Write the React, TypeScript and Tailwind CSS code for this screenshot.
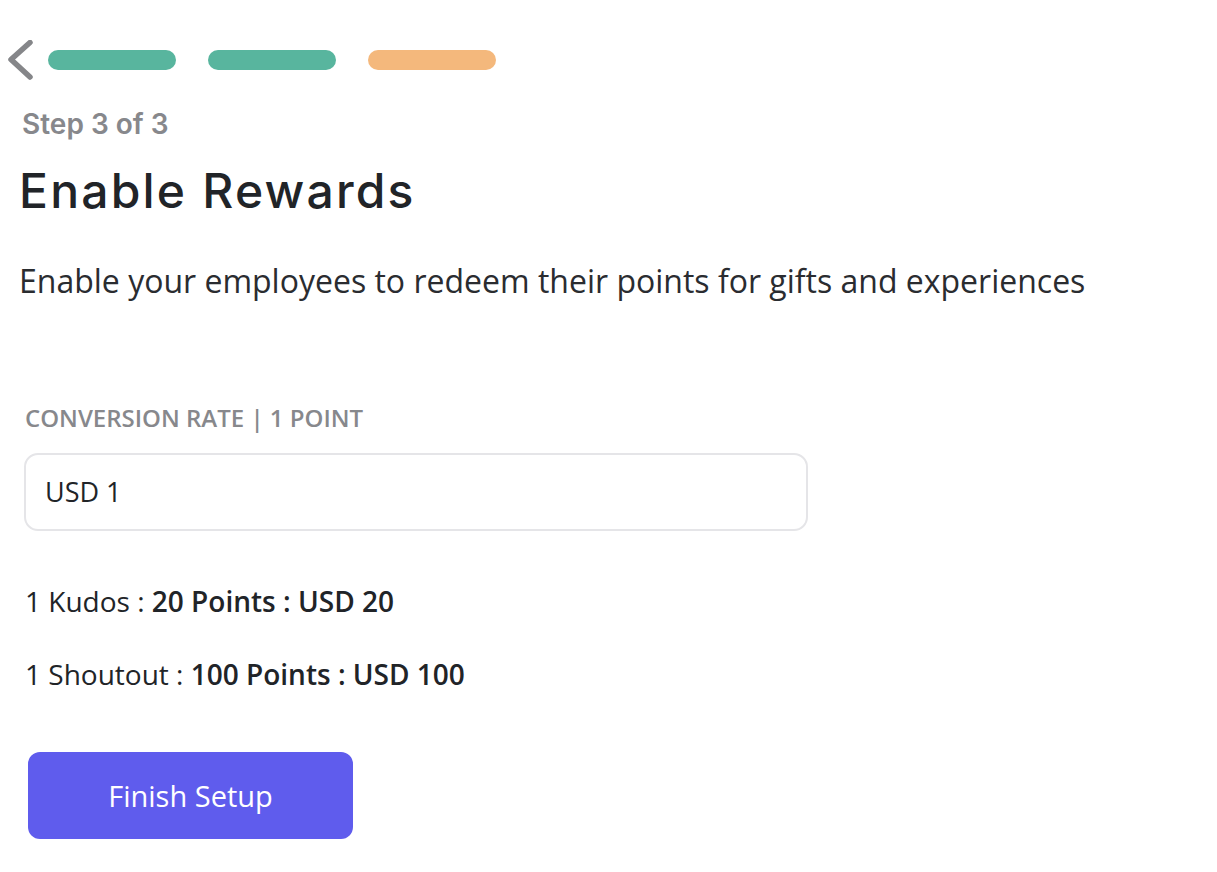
import React from "react";

export default function App() {
  const body = { fontFamily: '"Open Sans", "Noto Sans", sans-serif' };
  const head = { fontFamily: 'Inter, "Noto Sans", sans-serif' };
  return (
    <div className="min-h-[872px] w-[1217px] bg-white" style={body}>
      <div className="flex items-center pt-[40px] pl-[8px]">
        <svg width="26" height="40" viewBox="0 0 26 40" className="block">
          <path d="M22 2.5 L3 19.5 L22 37" fill="none" stroke="#858689" strokeWidth="5.5" strokeLinecap="round" strokeLinejoin="round" />
        </svg>
        <div className="ml-[14px] flex gap-[32px]">
          <div className="h-[20px] w-[128px] rounded-full bg-[#58b59e]" />
          <div className="h-[20px] w-[128px] rounded-full bg-[#58b59e]" />
          <div className="h-[20px] w-[128px] rounded-full bg-[#f4b87c]" />
        </div>
      </div>
      <div className="pl-[22px] pt-[28px] text-[28px] font-semibold leading-[32px] text-[#87888c]" style={head}>
        Step 3 of 3
      </div>
      <h1 className="pl-[19px] pt-[23px] text-[48px] font-medium leading-[56px] tracking-[2.2px] text-[#212428]" style={head}>
        Enable Rewards
      </h1>
      <p className="pl-[19px] pt-[42px] text-[32px] leading-[40px] text-[#2a2c30]">
        Enable your employees to redeem their points for gifts and experiences
      </p>
      <div className="pl-[25px] pt-[102px] text-[24px] font-semibold leading-[30px] text-[#87888c]">
        CONVERSION RATE | 1 POINT
      </div>
      <div className="ml-[24px] mt-[20px] flex h-[78px] w-[784px] items-center rounded-[14px] border-2 border-[#e5e5e8] pl-[19px] text-[27px] text-[#212428]">
        USD 1
      </div>
      <div className="pl-[25px] pt-[52px] text-[28px] leading-[36px] text-[#212428]">
        1 Kudos : <span className="font-semibold">20 Points : USD 20</span>
      </div>
      <div className="pl-[25px] pt-[37px] text-[28px] leading-[36px] text-[#212428]">
        1 Shoutout : <span className="font-semibold">100 Points : USD 100</span>
      </div>
      <button className="ml-[28px] mt-[60px] flex h-[87px] w-[325px] items-center justify-center rounded-[12px] bg-[#5f5ced] text-[29px] font-medium text-white">
        Finish Setup
      </button>
    </div>
  );
}
